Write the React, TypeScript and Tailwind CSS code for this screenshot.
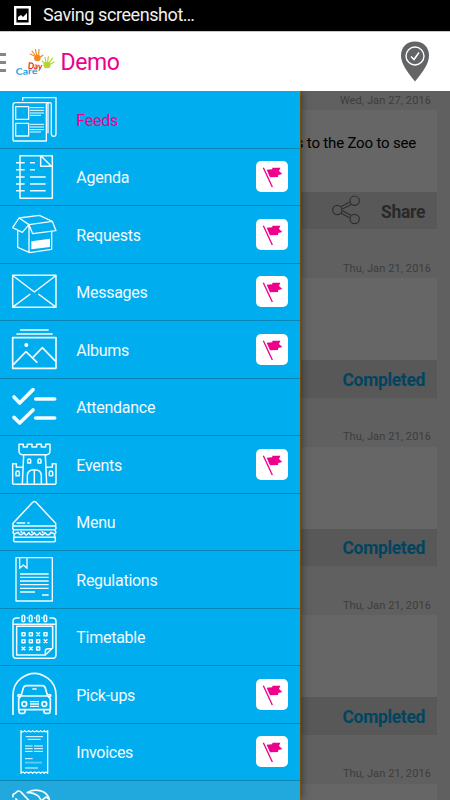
import type { ReactNode } from "react";

interface MenuItem {
  label: string;
  icon: ReactNode;
  flagged?: boolean;
  active?: boolean;
}

interface FeedEntry {
  date: string;
  text?: string;
  action?: "share" | "completed";
}

// Icons are drawn on a 144 unit grid, odd and even rows use their own origin.
function Icon({ even = false, width = 4, children }: { even?: boolean; width?: number; children: ReactNode }) {
  return (
    <svg
      viewBox={even ? "30 189 144 144" : "30 15 144 144"}
      className="ml-2.5 mt-1 size-12 shrink-0 self-start"
      fill="none"
      stroke="#f2fbff"
      strokeWidth={width}
      strokeLinejoin="round"
    >
      {children}
    </svg>
  );
}

const items: MenuItem[] = [
  {
    label: "Feeds",
    active: true,
    icon: (
      <Icon width={4}>
        <path d="M68 32V23H168V132Q168 139 161 139Q154 139 154 132V43Q154 38 149 38Q144 38 144 43V130M39 152V45Q39 38 46 38H149M39 153H139V43Q139 38 144 38" />
        <path d="M47 50H86V88H47ZM47 100H86V138H47Z" />
        <path d="M90 53H132M90 61H132M90 69H132M90 76H123M90 103H132M90 111H132M90 119H132M90 126H123" strokeWidth="3" />
      </Icon>
    ),
  },
  {
    label: "Agenda",
    flagged: true,
    icon: (
      <Icon even width={4.5}>
        <path d="M60 197H157V325H60ZM122 198V229H156M124 199L154 229" />
        <path d="M48 218H74M48 239H74M48 261H74M48 282H74M48 302H74M90 218H105M90 239H105M90 261H137M90 282H137M90 302H137" />
      </Icon>
    ),
  },
  {
    label: "Requests",
    flagged: true,
    icon: (
      <Icon>
        <path d="M57 39L118 31L157 49L87 59ZM57 39L38 68L67 82L87 59L98 86L168 77L157 49M53 76V127L89 143L155 133V80M87 60V142" />
        <path d="M94 109L150 101V126L94 133Z" fill="white" stroke="none" />
      </Icon>
    ),
  },
  {
    label: "Messages",
    flagged: true,
    icon: (
      <Icon even width={4.5}>
        <path d="M38 211H168V307H38ZM40 213L103 261L166 213M40 305L91 267M166 305L115 267" />
      </Icon>
    ),
  },
  {
    label: "Albums",
    flagged: true,
    icon: (
      <Icon>
        <path d="M38 53H168V145H38ZM60 30H146M49 42H158" strokeWidth="5" />
        <path d="M40 134L78 95L112 128M99 112L127 83L167 124" strokeWidth="5" />
        <circle cx="79" cy="75" r="6" fill="white" stroke="none" />
      </Icon>
    ),
  },
  {
    label: "Attendance",
    icon: (
      <Icon even width={11}>
        <path d="M42 231L59 249L99 209M42 292L59 309L99 270M107 237H164M107 294H164" strokeLinecap="round" />
      </Icon>
    ),
  },
  {
    label: "Events",
    flagged: true,
    icon: (
      <Icon width={4.5}>
        <path d="M57 28H70V36H82V28H96V36H110V28H124V36H137V28H150V48Q150 58 140 59H67Q57 58 57 48ZM71 60L67 147M136 60L140 147M38 147V86H49V97H69M168 147V86H157V97H138M38 148H168" />
        <path d="M82 146V122Q82 104 103 104Q124 104 124 122V146M103 104V146M83 84V76Q83 72 87.500 72Q92 72 92 76V84ZM114 84V76Q114 72 118.500 72Q123 72 123 76V84ZM48 122V112Q48 108 53 108Q58 108 58 112V122ZM148 122V112Q148 108 153 108Q158 108 158 112V122Z" />
      </Icon>
    ),
  },
  {
    label: "Menu",
    icon: (
      <Icon even width={4.5}>
        <path d="M39 272V265L98 202Q103 197 108 202L167 265V272M41 273H165Q168 273 168 278Q168 284 163 284H43Q38 284 38 278Q38 273 41 273ZM41 307H166V317Q166 320 162 320H45Q41 320 41 317ZM50 264H76M82 264H89" />
        <path d="M42 286Q36 293 43 297L54 292Q62 307 72 292Q78 307 86 293Q94 307 103 293Q111 307 119 293Q127 307 135 293Q145 307 153 292L164 297Q171 293 164 286M42 299V307M164 299V307M62 289L66 294M94 289L98 294M126 289L130 294" />
      </Icon>
    ),
  },
  {
    label: "Regulations",
    icon: (
      <Icon>
        <path d="M48 23H157V153H48ZM59 24V55L70 45L81 55V24" />
        <path d="M60 72H146M60 82H146M60 93H146M60 104H146M60 115H146M60 126H105M126 135H146" />
      </Icon>
    ),
  },
  {
    label: "Timetable",
    icon: (
      <Icon even width={4.5}>
        <path d="M59 204H50Q39 204 39 214V314Q39 325 50 325H157Q168 325 168 314V214Q168 204 157 204H148M39 223H168M50 229V315H136L158 294V229ZM136 314V303Q136 296 144 296H157M80 204H84M102 204H106M124 204H128" />
        <path d="M66 199Q70 193 74 199V213Q70 218 66 213ZM88 199Q92 193 96 199V213Q92 218 88 213ZM110 199Q114 193 118 199V213Q114 218 110 213ZM132 199Q136 193 140 199V213Q136 218 132 213Z" />
        <path d="M66 248H75V257H66ZM88 248H97V257H88ZM132 248H141V257H132ZM66 269H75V278H66ZM88 269H97V278H88ZM110 269H119V278H110ZM110 291H119V300H110ZM109 247L120 258M120 247L109 258M131 268L142 279M142 268L131 279M65 290L76 301M76 290L65 301M87 290L98 301M98 290L87 301" />
      </Icon>
    ),
  },
  {
    label: "Pick-ups",
    flagged: true,
    icon: (
      <Icon width={5}>
        <path d="M39 150V90Q39 58 63 40Q103 10 144 40Q168 58 168 90V150" />
        <path d="M63 93L70 69Q72 62 80 62H127Q134 62 136 69L143 93ZM63 93L56 101V134H151V101L143 93M62 97L54 94Q52 87 62 90M144 97L152 94Q154 87 144 90M57 134V141Q57 145 61 145H71Q75 145 75 141V135M132 135V141Q132 145 136 145H146Q150 145 150 141V134" />
        <circle cx="73" cy="117" r="7" />
        <circle cx="133" cy="117" r="7" />
        <path d="M90 110H117M90 117H117M90 124H117M97 72H110" strokeWidth="4" />
      </Icon>
    ),
  },
  {
    label: "Invoices",
    flagged: true,
    icon: (
      <Icon even>
        <path d="M63 197Q68 204 74 197Q80 204 86 197Q92 204 98 197Q104 204 110 197Q116 204 122 197Q128 204 133 197Q138 204 143 197V325Q138 318 133 325Q128 318 122 325Q116 318 110 325Q104 318 98 325Q92 318 86 325Q80 318 74 325Q68 318 63 325Z" />
        <path d="M77 215H129M83 223H122M75 243H98M102 243H129M75 251H98M102 251H129M75 259H98M102 259H129M75 281H98M75 309H114" strokeWidth="3" />
        <path d="M76 293H126" strokeWidth="5" strokeDasharray="4 2" opacity="0.6" />
      </Icon>
    ),
  },
];

const feed: FeedEntry[] = [
  { date: "Wed, Jan 27, 2016", text: "s to the Zoo to see", action: "share" },
  { date: "Thu, Jan 21, 2016", action: "completed" },
  { date: "Thu, Jan 21, 2016", action: "completed" },
  { date: "Thu, Jan 21, 2016", action: "completed" },
  { date: "Thu, Jan 21, 2016" },
];

function FlagBadge() {
  return (
    <span className="mb-[13px] ml-auto mr-3 h-[31px] w-8 self-end overflow-hidden rounded-[5px] bg-white">
      <svg viewBox="48 213 96 93" className="h-[31px] w-8">
        <path d="M70 233L97 291" stroke="#ec008c" strokeWidth="4" />
        <path d="M80 239L97 238V233H121L117 243L127 252L115 255L114 261L90 262Z" fill="#ec008c" />
      </svg>
    </span>
  );
}

function StatusBar() {
  return (
    <div className="flex h-[31px] shrink-0 items-center bg-black pl-3.5">
      <svg viewBox="0 0 17 19" className="h-[19px] w-[17px]">
        <path d="M1.200 1.200H15.800V17.800H1.200Z" fill="none" stroke="white" strokeWidth="2.400" />
        <path d="M4 14V11L7 9L9 11L13 7V14Z" fill="white" />
      </svg>
      <span className="ml-3 -mt-px text-[18px] leading-none tracking-[-0.42px] text-[#f0f0f0]">Saving screenshot…</span>
    </div>
  );
}

function Logo() {
  return (
    <svg viewBox="45 135 120 90" className="ml-[9px] h-[30px] w-10" strokeLinecap="round" fontFamily="Lato, sans-serif">
      <g stroke="#f08a1d" strokeWidth="3.500" fill="#f08a1d">
        <path d="M103 162L91 156M105 159L96 147M110 158L106 143M116 159L117 143M120 166L129 160" fill="none" />
        <ellipse cx="112" cy="168" rx="8" ry="8" />
      </g>
      <g stroke="#b5d334" strokeWidth="3.500" fill="#b5d334">
        <path d="M133 184L127 177M138 180L135 166M143 180L145 164M148 182L157 169M150 187L163 180" fill="none" />
        <ellipse cx="141" cy="189" rx="9" ry="8" />
      </g>
      <text x="83" y="200" fontSize="27" fontWeight="700" fill="#df202b" textLength="43" lengthAdjust="spacingAndGlyphs" transform="rotate(4 83 200)">Day</text>
      <text x="47" y="219" fontSize="27" fontWeight="700" fill="#1ba8dc" textLength="66" lengthAdjust="spacingAndGlyphs" transform="rotate(-3 47 219)">Care</text>
    </svg>
  );
}

function Header() {
  return (
    <header className="flex h-[60px] shrink-0 items-center border-t border-[#c8c8c8] bg-white pr-5">
      <div className="mt-0.5 flex w-1.5 flex-col gap-[5px]">
        <span className="h-[3px] bg-[#858585]" />
        <span className="h-[3px] bg-[#858585]" />
        <span className="h-[3px] bg-[#858585]" />
      </div>
      <Logo />
      <h1 className="ml-[5.5px] mt-0.5 text-[23px] leading-none tracking-[-0.4px] text-[#ec008c]">Demo</h1>
      <svg viewBox="0 0 30 41" className="ml-auto h-[41px] w-[30px]">
        <path d="M15 .5C6.500 .5 1 6.500 1 14.500C1 23 8 32 15 40.500C22 32 29 23 29 14.500C29 6.500 23.500 .5 15 .5Z" fill="#636466" />
        <circle cx="15" cy="15" r="9" fill="none" stroke="white" strokeWidth="1.400" />
        <path d="M11 15.500L14 18.500L19 11.500" fill="none" stroke="white" strokeWidth="1.600" />
      </svg>
    </header>
  );
}

function ShareIcon() {
  return (
    <svg viewBox="278 316 87 90" className="-mt-0.5 mr-[20px] h-[30px] w-[29px]" fill="none" stroke="#737373" strokeWidth="3.500">
      <circle cx="294" cy="361" r="14" />
      <circle cx="346" cy="333" r="14" />
      <circle cx="346" cy="388" r="14" />
      <path d="M305 351L331 337M309 358L335 345M309 363L335 377M305 371L331 384" />
    </svg>
  );
}

function Drawer() {
  return (
    <nav className="relative z-10 w-[300px] shrink-0 bg-[#00adef] shadow-[2px_0_8px_rgba(0,0,0,0.4)]">
      {items.map((item) => (
        <div
          key={item.label}
          className="flex h-[57px] items-center border-b border-[#0785b5] odd:h-[58px]"
        >
          {item.icon}
          <span className={`ml-[18.3px] mt-0.5 text-[16px] leading-5 tracking-[-0.27px] ${item.active ? "text-[#ec008c]" : "text-[#f2fbff]"}`}>
            {item.label}
          </span>
          {item.flagged && <FlagBadge />}
        </div>
      ))}
      <div className="flex h-[58px] bg-[#21a8dc]">
        <Icon width={5}>
          <path d="M40 52Q35 43 45 40L52 34Q58 31 64 37L112 89L94 105L46 55M80 38Q104 24 130 35Q145 44 148 58L138 51L124 62L116 49Q100 36 80 38" />
        </Icon>
      </div>
    </nav>
  );
}

function Feed() {
  return (
    <main className="min-w-0 flex-1 bg-[#f0f0f0] pr-[13px]">
      {feed.map((entry, i) => (
        <article key={i} className="group">
          <div className="flex h-[49px] items-end justify-end pb-[2.5px] pr-1.5 text-[11px] leading-[15px] tracking-[0.1px] text-[#999] group-first:h-[19px]">
            {entry.date}
          </div>
          <div className="flex h-[82px] justify-end bg-white pr-[21px] pt-[23px]">
            {entry.text && <p className="whitespace-nowrap text-[15px] leading-5 tracking-[-0.18px] text-black">{entry.text}</p>}
          </div>
          {entry.action && (
            <div className="flex h-[37.4px] items-center justify-end bg-[#dcdcdc] pr-3 text-[17.5px] font-bold tracking-[-0.35px]">
              {entry.action === "share" && <ShareIcon />}
              <span className={entry.action === "share" ? "mt-0.5 text-[#666]" : "mt-0.5 text-[#00adef]"}>
                {entry.action === "share" ? "Share" : "Completed"}
              </span>
            </div>
          )}
        </article>
      ))}
    </main>
  );
}

export default function App() {
  return (
    <div className="flex h-[800px] w-[450px] flex-col overflow-hidden font-['Roboto',sans-serif]">
      <StatusBar />
      <Header />
      <div className="relative flex min-h-0 flex-1 overflow-hidden">
        <Drawer />
        <Feed />
        {/* scrim over the feed while the drawer is open */}
        <div className="absolute inset-y-0 left-[300px] right-0 border-l border-[#a06a10] bg-black/60" />
      </div>
    </div>
  );
}
